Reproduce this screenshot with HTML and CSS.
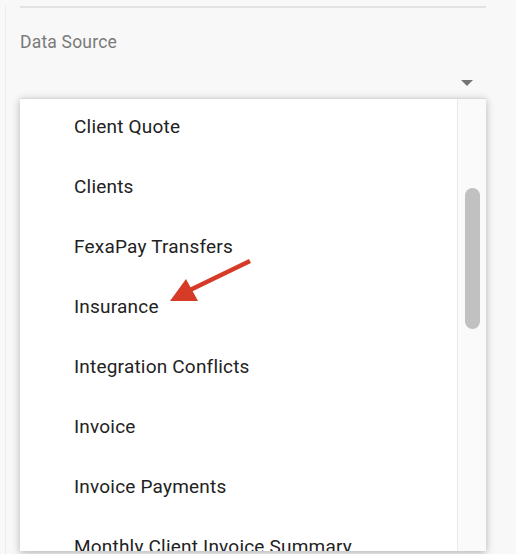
FILE: index.html
```html
<!DOCTYPE html>
<html>
<head>
<meta charset="utf-8">
<link rel="stylesheet" href="styles.css">
</head>
<body>
<div class="page">
  <div class="panel">
    <div class="rule"></div>
    <div class="label">Data Source</div>
    <div class="select">
      <svg class="caret" width="12" height="6" viewBox="0 0 12 6"><path d="M0 0H12L6 6Z" fill="#757575"/></svg>
    </div>
    <div class="menu">
      <ul class="list">
        <li>Client Quote</li>
        <li>Clients</li>
        <li>FexaPay Transfers</li>
        <li>Insurance</li>
        <li>Integration Conflicts</li>
        <li>Invoice</li>
        <li>Invoice Payments</li>
        <li>Monthly Client Invoice Summary</li>
      </ul>
      <div class="track"><div class="thumb"></div></div>
    </div>
  </div>
  <svg class="arrow" width="516" height="554" viewBox="0 0 516 554">
    <line x1="250" y1="261" x2="188" y2="291" stroke="#d63b28" stroke-width="4.5" stroke-linecap="butt"/>
    <polygon points="170,301 186,279 198,301" fill="#d63b28"/>
  </svg>
</div>
</body>
</html>
```
FILE: styles.css
```css
html, body {
  margin: 0;
  padding: 0;
  background: #f8f8f8;
  font-family: Roboto, "Liberation Sans", sans-serif;
}
.page {
  position: relative;
  width: 516px;
  height: 554px;
  overflow: hidden;
}
.panel {
  margin-left: 5px;
  border-left: 1px solid #ececec;
  height: 554px;
  padding-left: 14px;
  width: 466px;
}
.rule {
  margin-top: 6px;
  height: 2px;
  background: #e2e2e2;
}
.label {
  margin-top: 22px;
  font-size: 17.5px;
  letter-spacing: 0.2px;
  line-height: 24px;
  color: #7a7a7a;
}
.select {
  height: 42px;
  position: relative;
}
.caret {
  position: absolute;
  right: 13px;
  top: 26px;
}
.menu {
  margin-top: 2px;
  height: 452px;
  background: #ffffff;
  border-top: 1px solid #d6dadd;
  box-shadow: 0 2px 8px rgba(0, 0, 0, 0.28);
  display: flex;
  overflow: hidden;
}
.list {
  flex: 1;
  list-style: none;
  margin: -2px 0 0 0;
  padding: 0;
}
.list li {
  height: 60px;
  line-height: 60px;
  padding-left: 54px;
  font-size: 19px;
  letter-spacing: 0.2px;
  color: #222222;
  white-space: nowrap;
}
.track {
  width: 28px;
  border-left: 1px solid #e9e9e9;
  background: #fafafa;
  position: relative;
}
.thumb {
  position: absolute;
  left: 7px;
  top: 89px;
  width: 15px;
  height: 141px;
  border-radius: 8px;
  background: #c1c1c1;
}
.arrow {
  position: absolute;
  left: 0;
  top: 0;
  pointer-events: none;
}
```
